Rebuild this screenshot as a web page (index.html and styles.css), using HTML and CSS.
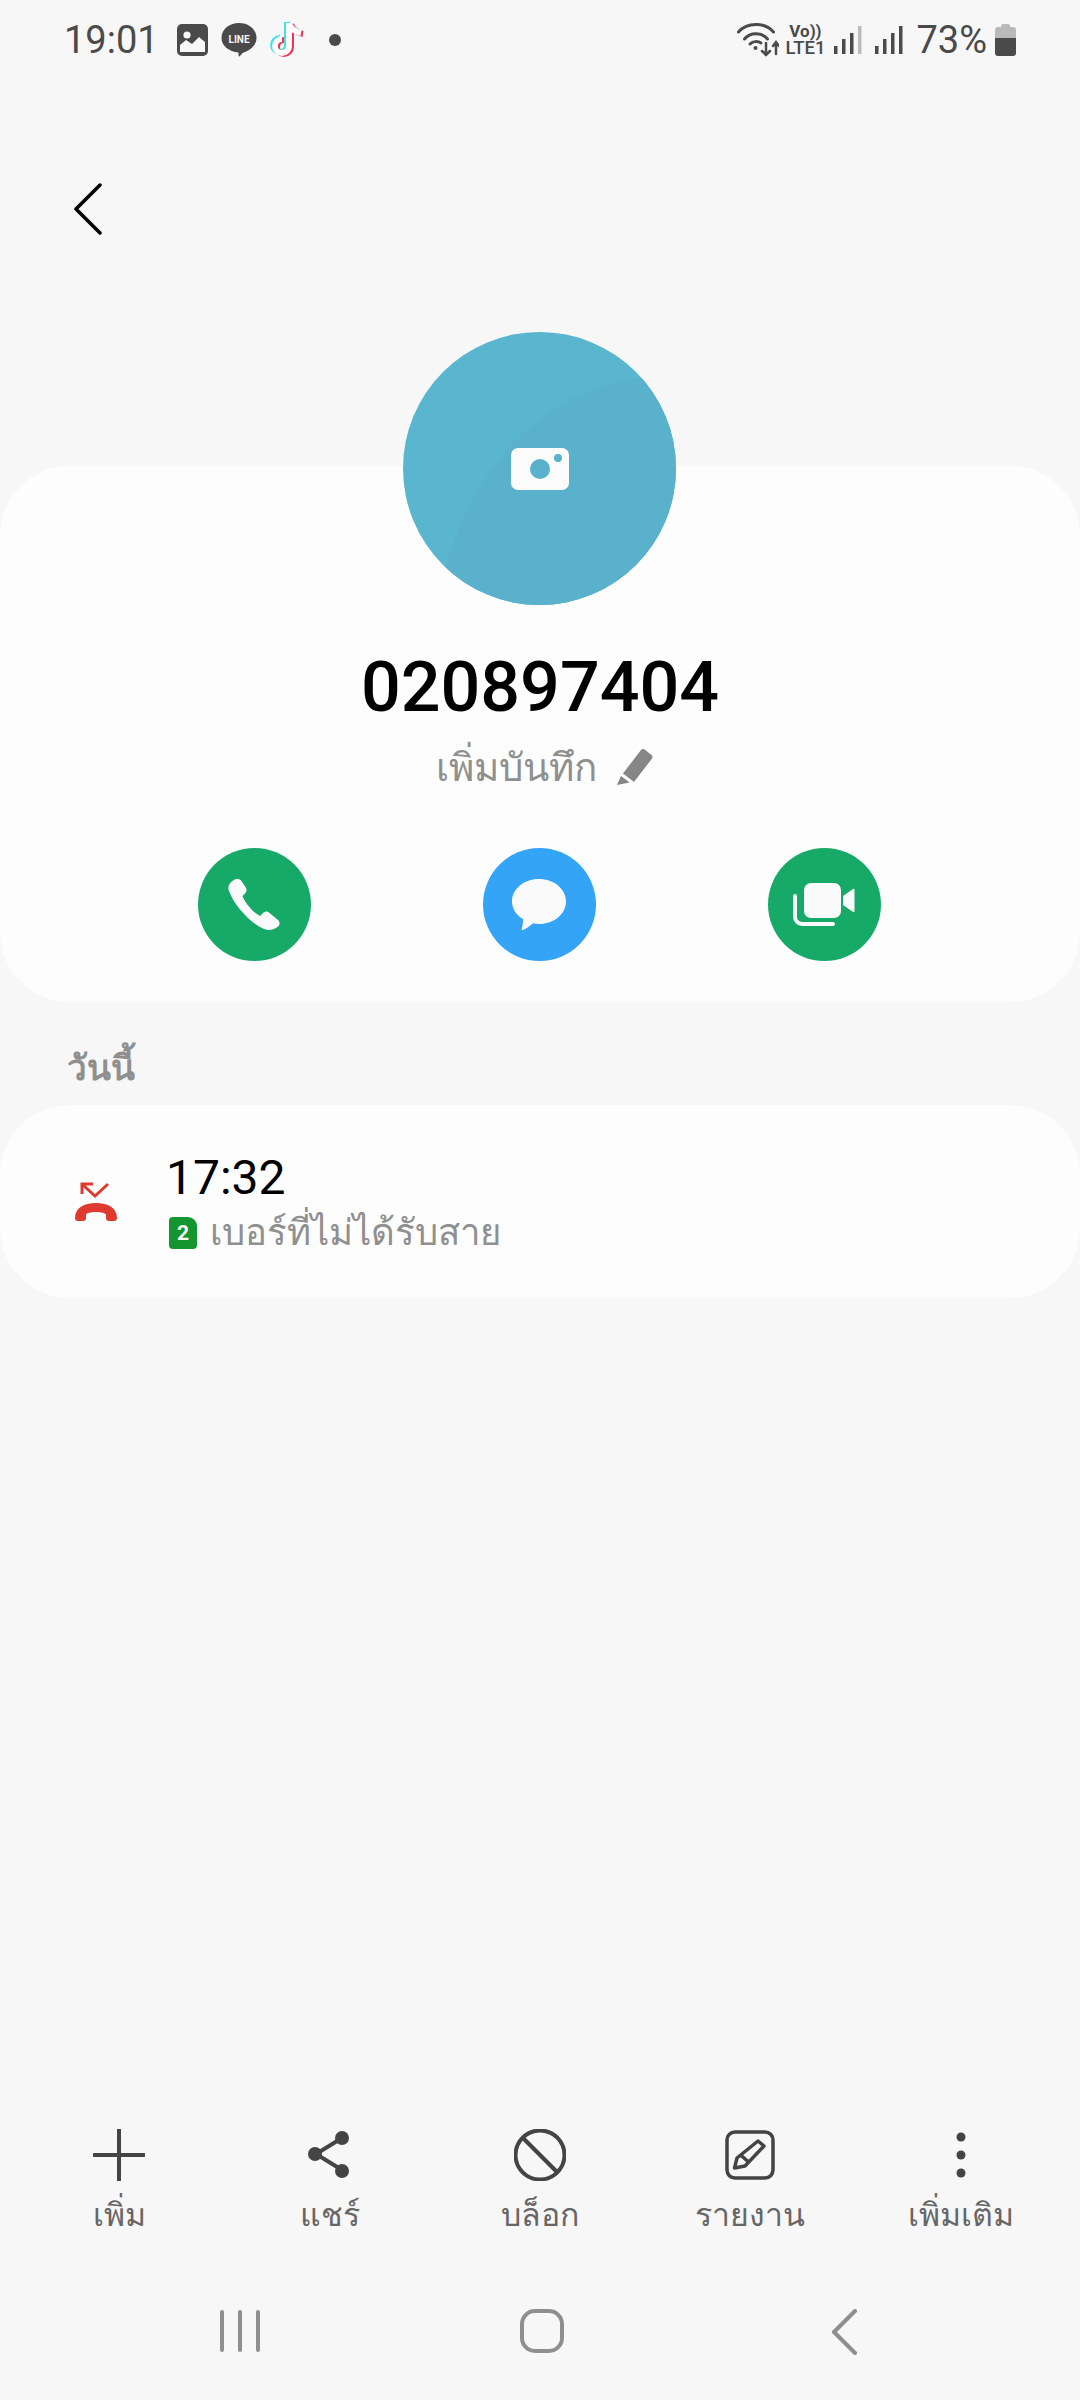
FILE: index.html
```html
<!DOCTYPE html>
<html lang="th">
<head>
    <meta charset="UTF-8">
    <meta name="viewport" content="width=device-width, initial-scale=1.0">
    <title>020897404</title>
    <link rel="stylesheet" href="styles.css">
</head>
<body>

<div class="status-bar">
    <div class="status-left">
        <span class="clock">19:01</span>
        <svg class="ic-gallery" width="31" height="32" viewBox="0 0 31 32"><rect width="31" height="32" rx="5" fill="#4a4a4a"/><circle cx="10" cy="11" r="3.6" fill="#f7f7f7"/><path d="M3 28v-7l6-5 6 4 7-7 6 5v10z" fill="#f7f7f7"/></svg>
        <svg class="ic-line" width="36" height="36" viewBox="0 0 36 36"><path d="M18 1c10 0 17.500 6.500 17.500 15 0 8-7.500 13-13 14.500-1 .5-2.500 2-3.500 3.500-1 1-1.500 0-1.500-1v-2.500C8 29.500.5 24 .5 16 .5 7.500 8 1 18 1z" fill="#4a4a4a"/><text x="18" y="20.500" class="line-text" text-anchor="middle">LINE</text></svg>
        <svg class="ic-tiktok" width="36" height="40" viewBox="0 0 36 40">
            <path d="M20 3v23a7 7 0 1 1-7-7M20 3c1 5 6 9 12 10" fill="none" stroke="#3ee4e8" stroke-width="6" transform="translate(-2 -1)"/>
            <path d="M20 3v23a7 7 0 1 1-7-7M20 3c1 5 6 9 12 10" fill="none" stroke="#f0325a" stroke-width="6" transform="translate(2 1)"/>
            <path d="M20 3v23a7 7 0 1 1-7-7M20 3c1 5 6 9 12 10" fill="none" stroke="#fff" stroke-width="6"/>
        </svg>
        <span class="status-dot"></span>
    </div>
    <div class="status-right">
        <svg class="ic-wifi" width="42" height="34" viewBox="0 0 42 34" fill="none" stroke="#4a4a4a" stroke-width="3" stroke-linecap="round"><path d="M1.500 9C10-1 28-1 36.500 9"/><path d="M7.500 16C13 9 25 9 30.500 16"/><path d="M13 21C16 18 21 18 24 20"/><circle cx="18.500" cy="25" r="2" fill="#4a4a4a" stroke="none"/><path d="M29 20v12m-4-4 4 4 4-4" stroke-width="2.500"/><path d="M39 31V19m-3 4 3-4 3 4" stroke-width="2.500"/></svg>
        <div class="volte"><span class="vo">Vo))</span><span class="lte">LTE1</span></div>
        <svg class="ic-signal" width="28" height="30" viewBox="0 0 28 30"><rect x="0" y="21" width="3.500" height="8" fill="#4a4a4a"/><rect x="8" y="14" width="3.500" height="15" fill="#4a4a4a"/><rect x="16" y="8" width="3.500" height="21" fill="#4a4a4a"/><rect x="24" y="1" width="3.500" height="28" fill="#bcbcbc"/></svg>
        <svg class="ic-signal" width="28" height="30" viewBox="0 0 28 30"><rect x="0" y="21" width="3.500" height="8" fill="#4a4a4a"/><rect x="8" y="14" width="3.500" height="15" fill="#4a4a4a"/><rect x="16" y="8" width="3.500" height="21" fill="#4a4a4a"/><rect x="24" y="1" width="3.500" height="28" fill="#4a4a4a"/></svg>
        <span class="battery-text">73%</span>
        <svg class="ic-battery" width="21" height="32" viewBox="0 0 21 32"><path d="M6 3V2a2 2 0 0 1 2-2h5a2 2 0 0 1 2 2v1h3a3 3 0 0 1 3 3v8H0V6a3 3 0 0 1 3-3z" fill="#b9b9b9"/><path d="M0 14h21v15a3 3 0 0 1-3 3H3a3 3 0 0 1-3-3z" fill="#4a4a4a"/></svg>
    </div>
</div>

<div class="top-bar">
    <svg width="28" height="52" viewBox="0 0 28 52" fill="none" stroke="#000" stroke-width="3.500" stroke-linecap="round" stroke-linejoin="round"><path d="M26 2 2 26l24 24"/></svg>
</div>

<div class="avatar">
    <svg width="273" height="273" viewBox="0 0 273 273">
        <circle cx="136.500" cy="136.500" r="136.500" fill="#5ab6cf"/>
        <clipPath id="avatar-clip"><circle cx="136.500" cy="136.500" r="136.500"/></clipPath>
        <path clip-path="url(#avatar-clip)" d="M43 235C65 150 130 60 235 46L273 46V273H0z" fill="#59b1cb"/>
        <rect x="108" y="116" width="58" height="42" rx="7" fill="#fbfbfb"/>
        <circle cx="137" cy="137" r="10" fill="#59b1cb"/>
        <circle cx="155" cy="126" r="4" fill="#59b1cb"/>
    </svg>
</div>

<div class="card contact-card">
    <div class="number">020897404</div>
    <div class="add-note">
        <span>เพิ่มบันทึก</span>
        <svg width="36" height="36" viewBox="0 0 36 36"><path d="M24 1c1-1 2.500-1.200 3.500-.5l7 5.500c1.200 1 1.300 2.500.5 3.500L17 33 6 24.500z" fill="#868686"/><path d="M4 27l8.500 6.500L0 36z" fill="#868686"/></svg>
    </div>
    <div class="actions">
        <div class="action green">
            <svg width="52" height="52" viewBox="0 0 52 52"><path d="M6 1C9-1 12 0 13.500 2L18 9C19 11 18.500 13 17 14.500L14.500 17C16 22 24 33 32 37L35 34C37 32 39.500 32 41 33.500L50 41C52 43 52 46 50 47.500 46 51 41 52 36 50 22 44 6 26 1 12-1 8 2 3 6 1z" fill="#fafafa"/></svg>
        </div>
        <div class="action blue">
            <svg width="54" height="52" viewBox="0 0 54 52"><path d="M27 0c15 0 27 10 27 22.500S42 45 27 45c-2 0-4-.2-6-.7C18 47 14 50 11 51c-1 .2-1.500-.5-1.200-1.500.8-2.500 1.200-5 1.200-9.500C4 36 0 29.500 0 22.500 0 10 12 0 27 0z" fill="#fafafa"/></svg>
        </div>
        <div class="action green">
            <svg width="62" height="44" viewBox="0 0 62 44" fill="none"><rect x="11" y="0" width="37" height="35" rx="7" fill="#fafafa"/><path d="M50 13 60 6c1-.5 1.500 0 1.500 1v21c0 1-.5 1.500-1.500 1l-10-7z" fill="#fafafa"/><path d="M2 13v21a7 7 0 0 0 7 7h31" stroke="#fafafa" stroke-width="4" stroke-linecap="round"/></svg>
        </div>
    </div>
</div>

<div class="section-title">วันนี้</div>

<div class="card log-card">
    <svg class="ic-missed" width="42" height="40" viewBox="0 0 42 40" fill="none">
        <path d="M7 12V2h11M8 3l12 11L33 2" stroke="#df3a2f" stroke-width="3"/>
        <path d="M0 36c0-10 9-15 21-15s21 5 21 15c0 2-1 3-3 3h-5c-2 0-3-1-3-3v-3c0-2-5-3-10-3s-10 1-10 3v3c0 2-1 3-3 3H3c-2 0-3-1-3-3z" fill="#df3a2f"/>
    </svg>
    <div class="log-text">
        <div class="log-time">17:32</div>
        <div class="log-sub">
            <span class="sim">2</span>
            <span>เบอร์ที่ไม่ได้รับสาย</span>
        </div>
    </div>
</div>

<div class="spacer"></div>

<div class="toolbar">
    <div class="tool">
        <svg width="52" height="52" viewBox="0 0 52 52" fill="none" stroke="#444" stroke-width="4" stroke-linecap="round"><path d="M26 1v50M1 26h50"/></svg>
        <span>เพิ่ม</span>
    </div>
    <div class="tool">
        <svg width="52" height="52" viewBox="0 0 52 52" fill="none" stroke="#444" stroke-width="4"><path d="M38 9 12 25l26 16"/><g fill="#444" stroke="none"><circle cx="38" cy="9" r="7"/><circle cx="11" cy="25" r="7"/><circle cx="38" cy="42" r="7"/></g></svg>
        <span>แชร์</span>
    </div>
    <div class="tool">
        <svg width="52" height="52" viewBox="0 0 52 52" fill="none" stroke="#444" stroke-width="4"><circle cx="26" cy="26" r="24.500"/><path d="M9 9l34 34"/></svg>
        <span>บล็อก</span>
    </div>
    <div class="tool">
        <svg width="50" height="50" viewBox="0 0 50 50" fill="none" stroke="#444" stroke-width="3.500" stroke-linejoin="round"><rect x="2" y="2" width="46" height="46" rx="8"/><path d="M33 11 39 16 20 36 9.500 38 12 28zM15 24.500l8 7"/></svg>
        <span>รายงาน</span>
    </div>
    <div class="tool">
        <svg width="12" height="46" viewBox="0 0 12 46" fill="#444"><circle cx="6" cy="5" r="4.500"/><circle cx="6" cy="23" r="4.500"/><circle cx="6" cy="41" r="4.500"/></svg>
        <span>เพิ่มเติม</span>
    </div>
</div>

<div class="nav-bar">
    <svg width="44" height="44" viewBox="0 0 44 44" fill="#8f8f8f"><rect x="2" y="1" width="4" height="42" rx="2"/><rect x="20" y="1" width="4" height="42" rx="2"/><rect x="38" y="1" width="4" height="42" rx="2"/></svg>
    <svg class="nav-home" width="44" height="44" viewBox="0 0 44 44" fill="none" stroke="#8f8f8f" stroke-width="4"><rect x="2" y="2" width="40" height="40" rx="13"/></svg>
    <svg class="nav-back" width="26" height="46" viewBox="0 0 26 46" fill="none" stroke="#8f8f8f" stroke-width="4" stroke-linecap="round" stroke-linejoin="round"><path d="M24 2 3 23l21 21"/></svg>
</div>

</body>
</html>
```

FILE: styles.css
```css
* {
    box-sizing: border-box;
}
body {
    font-family: Roboto, "Noto Sans", "DejaVu Sans", sans-serif;
    background-color: #f7f7f7;
    color: #000;
    margin: 0;
    width: 1080px;
    height: 2400px;
    display: flex;
    flex-direction: column;
    overflow: hidden;
}
.status-bar {
    height: 80px;
    padding: 0 64px;
    display: flex;
    justify-content: space-between;
    align-items: center;
    color: #4a4a4a;
}
.status-left,
.status-right {
    display: flex;
    align-items: center;
}
.clock {
    font-size: 38px;
    margin-right: 18px;
}
.ic-line {
    margin-left: 13px;
}
.line-text {
    font-size: 10px;
    font-weight: 700;
    fill: #f7f7f7;
}
.ic-tiktok {
    margin-left: 12px;
}
.status-dot {
    width: 12px;
    height: 12px;
    border-radius: 50%;
    background-color: #4a4a4a;
    margin-left: 24px;
}
.volte {
    display: flex;
    flex-direction: column;
    align-items: center;
    margin: 0 9px 0 6px;
    font-weight: 700;
}
.vo {
    font-size: 17px;
    line-height: 16px;
}
.lte {
    font-size: 18.5px;
    line-height: 18px;
    font-weight: 500;
}
.ic-signal {
    margin-right: 13px;
}
.battery-text {
    font-size: 38px;
    margin-right: 8px;
}
.top-bar {
    height: 174px;
    padding: 103px 0 0 74px;
}
.avatar {
    height: 273px;
    margin-top: 78px;
    margin-left: -1px;
    display: flex;
    justify-content: center;
    position: relative;
    z-index: 1;
}
.card {
    background-color: #fdfdfd;
    border-radius: 70px;
}
.contact-card {
    height: 536px;
    margin-top: -139px;
    display: flex;
    flex-direction: column;
    align-items: center;
    padding-top: 180px;
}
.number {
    font-size: 70px;
    line-height: 82px;
    font-weight: 500;
}
.add-note {
    display: flex;
    align-items: center;
    gap: 20px;
    margin: 14px 0 0 9px;
    font-size: 38.5px;
    color: #8f8f8f;
    height: 50px;
}
.actions {
    display: flex;
    gap: 172px;
    margin: 56px 2px 0 0;
}
.action {
    width: 113px;
    height: 113px;
    border-radius: 50%;
    display: flex;
    justify-content: center;
    align-items: center;
}
.action.green {
    background-color: #16a968;
}
.action.blue {
    background-color: #33a4f6;
}
.section-title {
    height: 103px;
    padding: 38px 0 0 67px;
    font-size: 35px;
    font-weight: 700;
    color: #8f8f8f;
}
.log-card {
    height: 193px;
    display: flex;
    align-items: center;
    padding-left: 75px;
}
.ic-missed {
    margin-top: 1px;
}
.log-text {
    margin-left: 52px;
    padding-top: 5px;
}
.log-time {
    font-size: 48px;
    line-height: 54px;
    margin-left: -3px;
}
.log-sub {
    display: flex;
    align-items: center;
    gap: 13px;
    margin-top: 3px;
    font-size: 36.5px;
    line-height: 50px;
    color: #8f8f8f;
}
.sim {
    width: 28px;
    height: 32px;
    background-color: #14952f;
    color: #fff;
    font-size: 21px;
    font-weight: 700;
    line-height: 32px;
    text-align: center;
    border-radius: 4px 9px 4px 4px;
}
.spacer {
    flex: 1;
}
.toolbar {
    height: 120px;
    padding: 0 14px;
    display: grid;
    grid-template-columns: repeat(5, 210.4px);
    margin-bottom: 47px;
}
.tool {
    display: flex;
    flex-direction: column;
    align-items: center;
    font-size: 32px;
    color: #666;
}
.tool svg {
    height: 52px;
    margin-bottom: 8px;
}
.nav-bar {
    height: 104px;
    padding: 13px 0 0 218px;
    display: flex;
    align-items: flex-start;
}
.nav-home {
    margin-left: 258px;
}
.nav-back {
    margin-left: 267px;
}
```
